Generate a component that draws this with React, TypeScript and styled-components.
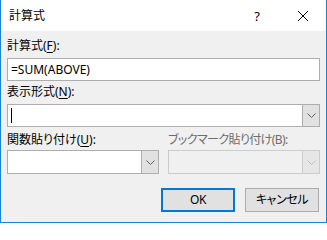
import React from "react";
import styled, { createGlobalStyle } from "styled-components";

const Global = createGlobalStyle`
  html, body { margin: 0; padding: 0; background: #ffffff; }
  * { box-sizing: border-box; }
`;

const FONT = `"Noto Sans", "Noto Sans CJK JP", sans-serif`;

const Window = styled.div`
  width: 327px;
  height: 223px;
  border: 1px solid #1883d7;
  border-top: none;
  display: flex;
  flex-direction: column;
  font-family: ${FONT};
  font-size: 12px;
  color: #000;
  background: #f0f0f0;
`;

const TitleBar = styled.div`
  height: 31px;
  flex: none;
  background: #ffffff;
  display: flex;
  align-items: center;
`;

const Title = styled.div`
  flex: 1;
  padding-left: 8px;
  line-height: 16px;
`;

const CaptionButton = styled.div`
  width: 46px;
  height: 31px;
  display: flex;
  align-items: center;
  justify-content: center;
  font-size: 13px;
  color: #000;
`;

const Body = styled.div`
  flex: 1;
  padding: 7px 6px 0 6px;
  display: flex;
  flex-direction: column;
`;

const Label = styled.div<{ $disabled?: boolean; $mt?: number; $mb?: number; $prop?: boolean; $tight?: boolean }>`
  height: 16px;
  line-height: 16px;
  white-space: nowrap;
  margin-top: ${(p) => p.$mt ?? 0}px;
  margin-bottom: ${(p) => p.$mb ?? 0}px;
  color: ${(p) => (p.$disabled ? "#6d6d6d" : "#000")};
  font-feature-settings: ${(p) => (p.$prop ? `"palt"` : "normal")};
  letter-spacing: ${(p) => (p.$tight ? "-0.6px" : "normal")};
`;

const Key = styled.span`
  text-decoration: underline;
  text-underline-offset: 2px;
`;

const TextBox = styled.div`
  height: 23px;
  background: #ffffff;
  border: 1px solid #adadad;
  display: flex;
  align-items: center;
  padding-left: 3px;
  line-height: 16px;
  white-space: nowrap;
`;

const Combo = styled.div<{ $disabled?: boolean; $h: number }>`
  height: ${(p) => p.$h}px;
  display: flex;
  border: 1px solid ${(p) => (p.$disabled ? "#cccccc" : "#adadad")};
  background: ${(p) => (p.$disabled ? "#f0f0f0" : "#ffffff")};
`;

const ComboField = styled.div`
  flex: 1;
  display: flex;
  align-items: center;
  padding-left: 3px;
`;

const ComboButton = styled.div<{ $disabled?: boolean }>`
  width: 17px;
  flex: none;
  display: flex;
  align-items: center;
  justify-content: center;
  background: ${(p) => (p.$disabled ? "#e6e6e6" : "#e1e1e1")};
  border-left: 1px solid ${(p) => (p.$disabled ? "#cccccc" : "#adadad")};
`;

const Caret = styled.span`
  display: block;
  width: 1px;
  height: 15px;
  background: #000;
`;

const Row = styled.div`
  display: grid;
  grid-template-columns: 152px 152px;
  column-gap: 9px;
`;

const Column = styled.div`
  display: flex;
  flex-direction: column;
`;

const Buttons = styled.div`
  display: flex;
  justify-content: flex-end;
  gap: 10px;
  margin-top: 14px;
  padding-right: 1px;
`;

const Button = styled.div<{ $default?: boolean }>`
  width: 74px;
  height: 24px;
  background: #e1e1e1;
  border: ${(p) => (p.$default ? "2px solid #0078d7" : "1px solid #adadad")};
  display: flex;
  align-items: center;
  justify-content: center;
  line-height: 16px;
  font-feature-settings: "palt";
  letter-spacing: -0.4px;
`;

const Chevron = ({ color }: { color: string }) => (
  <svg width="9" height="5" viewBox="0 0 9 5">
    <polyline points="0.5,0.5 4.5,4.5 8.5,0.5" fill="none" stroke={color} strokeWidth="1" />
  </svg>
);

const CloseIcon = () => (
  <svg width="10" height="10" viewBox="0 0 10 10">
    <line x1="0" y1="0" x2="10" y2="10" stroke="#000" strokeWidth="1" />
    <line x1="10" y1="0" x2="0" y2="10" stroke="#000" strokeWidth="1" />
  </svg>
);

export default function App() {
  return (
    <>
      <Global />
      <Window>
        <TitleBar>
          <Title>計算式</Title>
          <CaptionButton>?</CaptionButton>
          <CaptionButton>
            <CloseIcon />
          </CaptionButton>
        </TitleBar>
        <Body>
          <Label $mb={4}>
            計算式(<Key>F</Key>):
          </Label>
          <TextBox>=SUM(ABOVE)</TextBox>
          <Label $mt={3} $mb={4}>
            表示形式(<Key>N</Key>):
          </Label>
          <Combo $h={23}>
            <ComboField>
              <Caret />
            </ComboField>
            <ComboButton>
              <Chevron color="#606060" />
            </ComboButton>
          </Combo>
          <Row>
            <Column>
              <Label $mt={5} $mb={2} $prop>
                関数貼り付け(<Key>U</Key>):
              </Label>
              <Combo $h={24}>
                <ComboField />
                <ComboButton>
                  <Chevron color="#606060" />
                </ComboButton>
              </Combo>
            </Column>
            <Column>
              <Label $mt={5} $mb={2} $disabled $prop $tight>
                ブックマーク貼り付け(B):
              </Label>
              <Combo $h={24} $disabled>
                <ComboField />
                <ComboButton $disabled>
                  <Chevron color="#bfbfbf" />
                </ComboButton>
              </Combo>
            </Column>
          </Row>
          <Buttons>
            <Button $default>OK</Button>
            <Button>キャンセル</Button>
          </Buttons>
        </Body>
      </Window>
    </>
  );
}
